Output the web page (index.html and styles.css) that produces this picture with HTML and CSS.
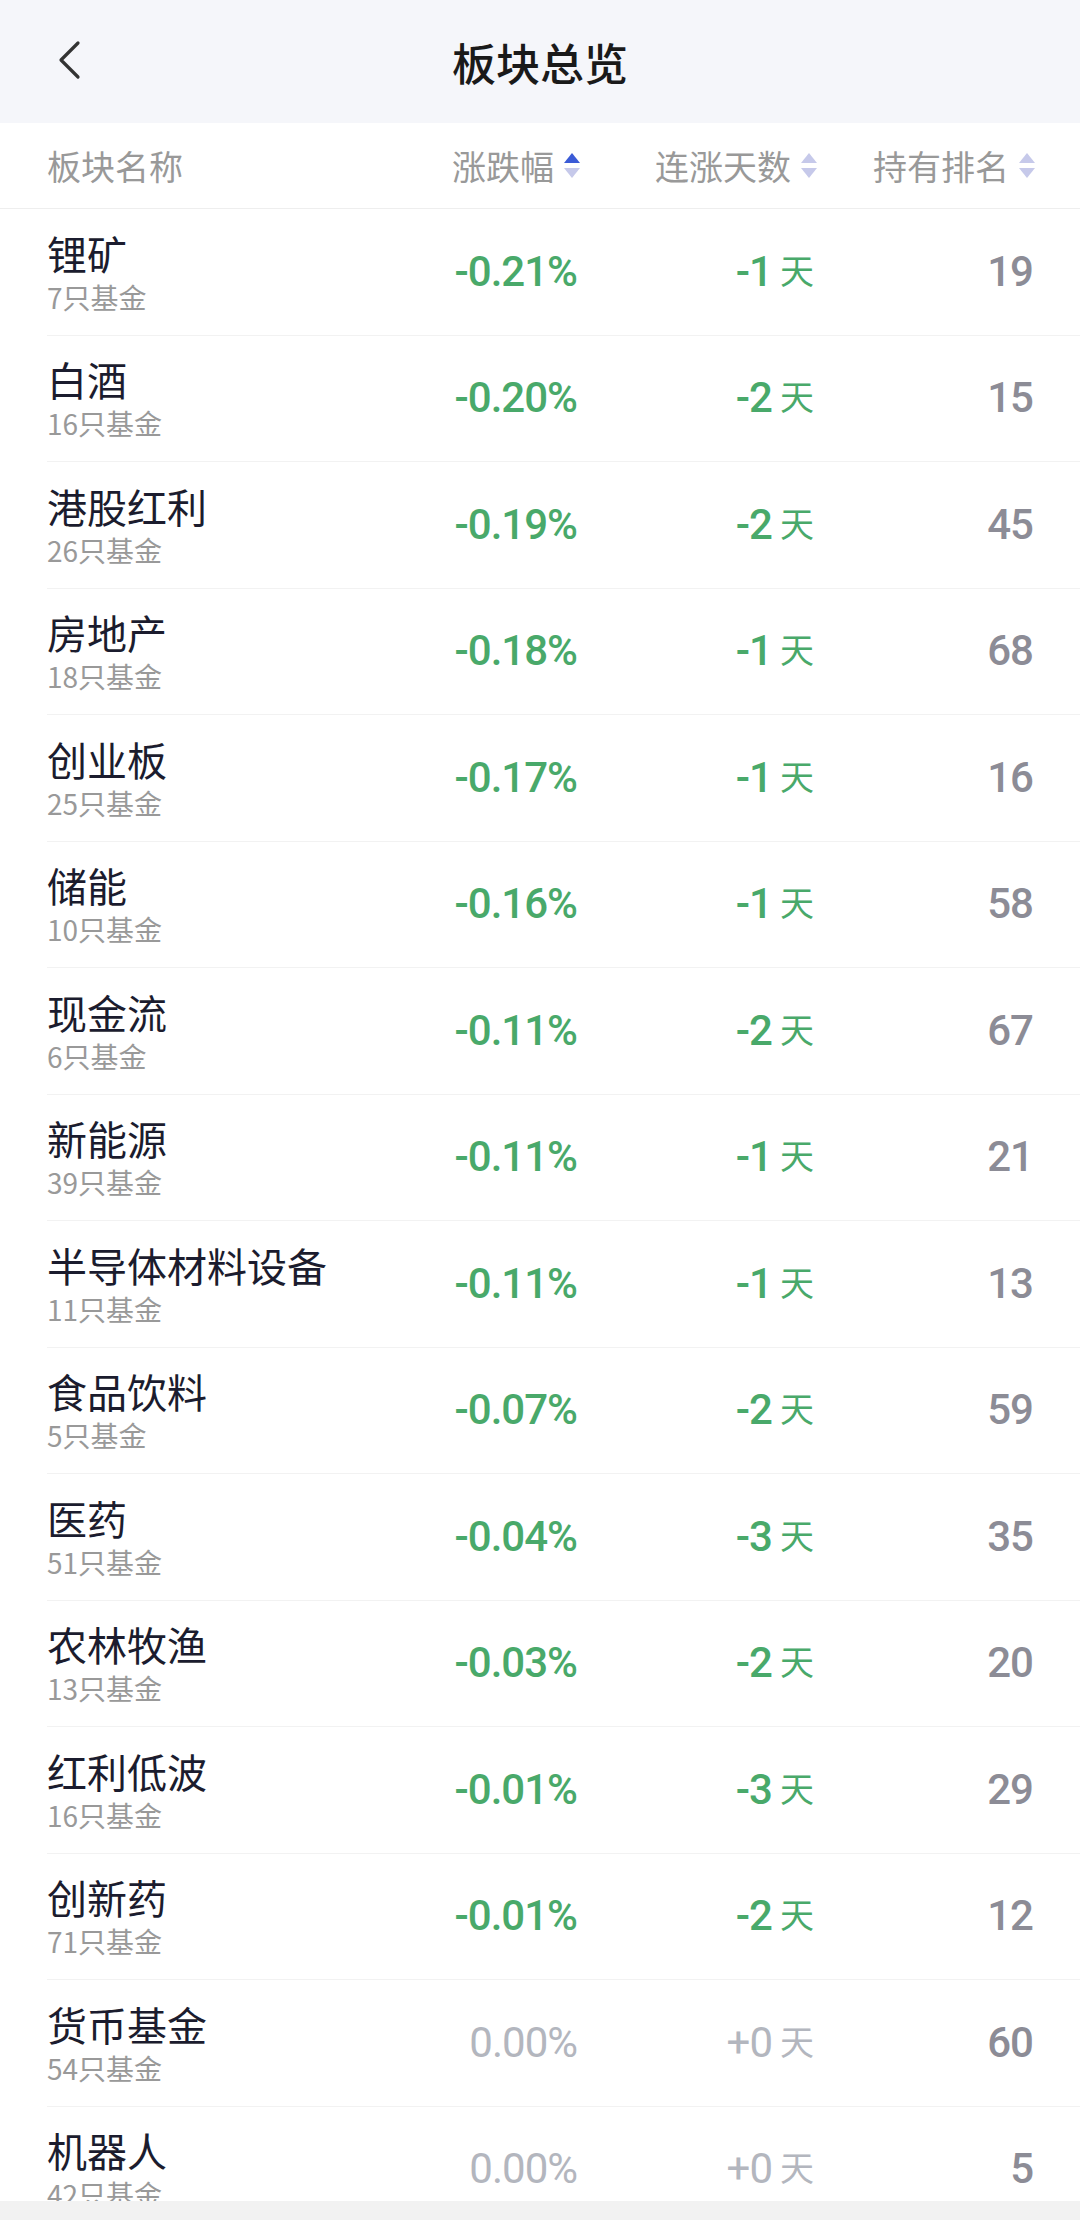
FILE: index.html
```html
<!DOCTYPE html>
<html>
<head>
    <meta charset="utf-8">
    <title>板块总览</title>
    <link rel="stylesheet" href="styles.css">
</head>
<body>
    <div class="topbar">
        <div class="back">
            <svg width="26" height="40" viewBox="0 0 26 40">
                <path d="M22 3 L5 20 L22 37" fill="none" stroke="#333" stroke-width="3.2" stroke-linecap="round" stroke-linejoin="round"/>
            </svg>
        </div>
        <div class="title">板块总览</div>
    </div>

    <div class="table-head">
        <div class="th th-name">板块名称</div>
        <div class="th">涨跌幅
            <svg class="sort" width="16" height="26" viewBox="0 0 16 26"><polygon points="8,0 16,10 0,10" fill="#3b5bd6"/><polygon points="0,15 16,15 8,25" fill="#c6c9ea"/></svg>
        </div>
        <div class="th">连涨天数
            <svg class="sort" width="16" height="26" viewBox="0 0 16 26"><polygon points="8,0 16,10 0,10" fill="#c6c9ea"/><polygon points="0,15 16,15 8,25" fill="#c6c9ea"/></svg>
        </div>
        <div class="th">持有排名
            <svg class="sort" width="16" height="26" viewBox="0 0 16 26"><polygon points="8,0 16,10 0,10" fill="#c6c9ea"/><polygon points="0,15 16,15 8,25" fill="#c6c9ea"/></svg>
        </div>
    </div>

    <div class="list">
        <div class="row">
            <div class="name"><div class="title-text">锂矿</div><div class="sub">7只基金</div></div>
            <div class="pct down">-0.21%</div>
            <div class="days down"><span class="num">-1</span><span class="unit">天</span></div>
            <div class="rank">19</div>
        </div>
        <div class="row">
            <div class="name"><div class="title-text">白酒</div><div class="sub">16只基金</div></div>
            <div class="pct down">-0.20%</div>
            <div class="days down"><span class="num">-2</span><span class="unit">天</span></div>
            <div class="rank">15</div>
        </div>
        <div class="row">
            <div class="name"><div class="title-text">港股红利</div><div class="sub">26只基金</div></div>
            <div class="pct down">-0.19%</div>
            <div class="days down"><span class="num">-2</span><span class="unit">天</span></div>
            <div class="rank">45</div>
        </div>
        <div class="row">
            <div class="name"><div class="title-text">房地产</div><div class="sub">18只基金</div></div>
            <div class="pct down">-0.18%</div>
            <div class="days down"><span class="num">-1</span><span class="unit">天</span></div>
            <div class="rank">68</div>
        </div>
        <div class="row">
            <div class="name"><div class="title-text">创业板</div><div class="sub">25只基金</div></div>
            <div class="pct down">-0.17%</div>
            <div class="days down"><span class="num">-1</span><span class="unit">天</span></div>
            <div class="rank">16</div>
        </div>
        <div class="row">
            <div class="name"><div class="title-text">储能</div><div class="sub">10只基金</div></div>
            <div class="pct down">-0.16%</div>
            <div class="days down"><span class="num">-1</span><span class="unit">天</span></div>
            <div class="rank">58</div>
        </div>
        <div class="row">
            <div class="name"><div class="title-text">现金流</div><div class="sub">6只基金</div></div>
            <div class="pct down">-0.11%</div>
            <div class="days down"><span class="num">-2</span><span class="unit">天</span></div>
            <div class="rank">67</div>
        </div>
        <div class="row">
            <div class="name"><div class="title-text">新能源</div><div class="sub">39只基金</div></div>
            <div class="pct down">-0.11%</div>
            <div class="days down"><span class="num">-1</span><span class="unit">天</span></div>
            <div class="rank">21</div>
        </div>
        <div class="row">
            <div class="name"><div class="title-text">半导体材料设备</div><div class="sub">11只基金</div></div>
            <div class="pct down">-0.11%</div>
            <div class="days down"><span class="num">-1</span><span class="unit">天</span></div>
            <div class="rank">13</div>
        </div>
        <div class="row">
            <div class="name"><div class="title-text">食品饮料</div><div class="sub">5只基金</div></div>
            <div class="pct down">-0.07%</div>
            <div class="days down"><span class="num">-2</span><span class="unit">天</span></div>
            <div class="rank">59</div>
        </div>
        <div class="row">
            <div class="name"><div class="title-text">医药</div><div class="sub">51只基金</div></div>
            <div class="pct down">-0.04%</div>
            <div class="days down"><span class="num">-3</span><span class="unit">天</span></div>
            <div class="rank">35</div>
        </div>
        <div class="row">
            <div class="name"><div class="title-text">农林牧渔</div><div class="sub">13只基金</div></div>
            <div class="pct down">-0.03%</div>
            <div class="days down"><span class="num">-2</span><span class="unit">天</span></div>
            <div class="rank">20</div>
        </div>
        <div class="row">
            <div class="name"><div class="title-text">红利低波</div><div class="sub">16只基金</div></div>
            <div class="pct down">-0.01%</div>
            <div class="days down"><span class="num">-3</span><span class="unit">天</span></div>
            <div class="rank">29</div>
        </div>
        <div class="row">
            <div class="name"><div class="title-text">创新药</div><div class="sub">71只基金</div></div>
            <div class="pct down">-0.01%</div>
            <div class="days down"><span class="num">-2</span><span class="unit">天</span></div>
            <div class="rank">12</div>
        </div>
        <div class="row">
            <div class="name"><div class="title-text">货币基金</div><div class="sub">54只基金</div></div>
            <div class="pct flat">0.00%</div>
            <div class="days flat"><span class="num">+0</span><span class="unit">天</span></div>
            <div class="rank">60</div>
        </div>
        <div class="row">
            <div class="name"><div class="title-text">机器人</div><div class="sub">42只基金</div></div>
            <div class="pct flat">0.00%</div>
            <div class="days flat"><span class="num">+0</span><span class="unit">天</span></div>
            <div class="rank">5</div>
        </div>
    </div>

    <div class="bottom-bar"></div>
</body>
</html>
```

FILE: styles.css
```css
body {
    margin: 0;
    padding: 0;
    width: 1080px;
    height: 2220px;
    overflow: hidden;
    background-color: #fff;
    font-family: "Noto Sans CJK SC", "Noto Sans", sans-serif;
    color: #1b1c2e;
}

.topbar {
    height: 123px;
    background-color: #f5f6fa;
    display: flex;
    align-items: center;
    justify-content: center;
    position: relative;
}

.back {
    position: absolute;
    left: 56px;
    top: 40px;
    width: 26px;
    height: 40px;
}

.title {
    font-size: 44px;
    font-weight: 500;
    color: #1a1a1a;
    line-height: 1;
}

.table-head {
    height: 86px;
    display: grid;
    grid-template-columns: 1fr 200px 237px 218px;
    align-items: center;
    padding: 0 45px 0 47px;
    border-bottom: 1px solid #eeeeee;
    box-sizing: border-box;
}

.th {
    font-size: 34px;
    color: #999;
    display: flex;
    align-items: center;
    justify-content: flex-end;
    line-height: 1;
}

.th-name {
    justify-content: flex-start;
}

.sort {
    margin-left: 10px;
}

.row {
    height: 126.5px;
    box-sizing: border-box;
    display: grid;
    grid-template-columns: 1fr 200px 237px 218px;
    align-items: center;
    padding: 0 45px 0 0;
    margin-left: 47px;
    border-bottom: 1px solid #f2f2f2;
}

.name {
    display: flex;
    flex-direction: column;
}

.title-text {
    font-size: 40px;
    line-height: 46px;
    color: #1b1c2e;
    white-space: nowrap;
}

.sub {
    font-size: 28px;
    line-height: 34px;
    color: #999;
    margin-top: 4px;
}

.pct, .days, .rank {
    text-align: right;
    font-family: Roboto, sans-serif;
    font-size: 42px;
    font-weight: 500;
    letter-spacing: -1px;
    line-height: 1;
}

.pct {
    padding-right: 3px;
}

.days {
    padding-right: 4px;
}

.unit {
    font-family: "Noto Sans CJK SC", sans-serif;
    font-weight: normal;
    font-size: 34px;
    margin-left: 8px;
    position: relative;
    top: -2px;
}

.down {
    color: #49a96a;
}

.flat {
    color: #b3b6be;
    font-weight: normal;
}

.rank {
    color: #8c8c96;
    padding-right: 2px;
}

.bottom-bar {
    position: fixed;
    left: 0;
    right: 0;
    bottom: 0;
    height: 19px;
    background-color: #f2f2f2;
}
```
